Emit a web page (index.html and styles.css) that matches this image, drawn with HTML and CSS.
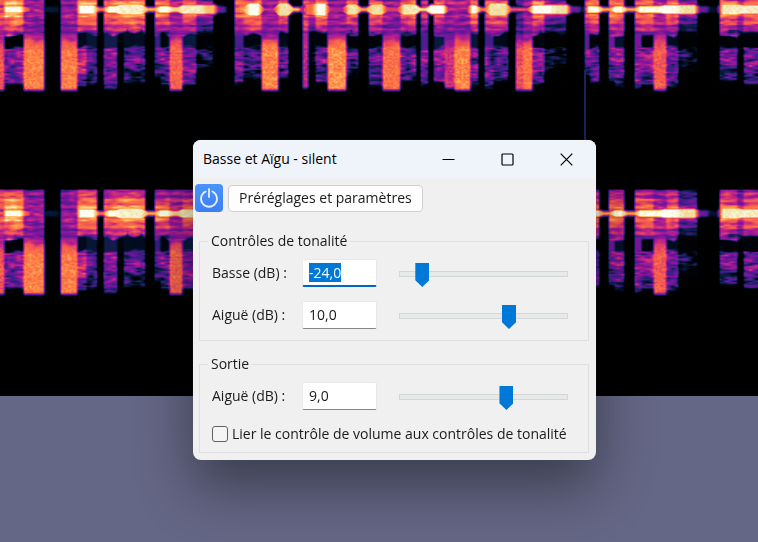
FILE: index.html
```html
<!DOCTYPE html>
<html lang="fr">
<head>
<meta charset="utf-8">
<title>Basse et Aïgu - silent</title>
<link rel="stylesheet" href="styles.css">
</head>
<body>
<main class="workspace">
  <canvas class="spectrogram" aria-hidden="true"></canvas>
  <form class="dialog">
    <header class="titlebar">
      <h1 class="title">Basse et Aïgu - silent</h1>
      <button type="button" class="caption" aria-label="Réduire"><svg width="13" height="13" viewBox="0 0 13 13"><path d="M0.5 6.5H12.5"/></svg></button>
      <button type="button" class="caption" aria-label="Agrandir"><svg width="13" height="13" viewBox="0 0 13 13"><rect x="1" y="1" width="11" height="11" rx="1"/></svg></button>
      <button type="button" class="caption" aria-label="Fermer"><svg width="13" height="13" viewBox="0 0 13 13"><path d="M0.7 0.7L12.3 12.3M12.3 0.7L0.7 12.3"/></svg></button>
    </header>
    <div class="toolbar">
      <button type="button" class="power" aria-label="Activer"><svg width="20" height="20" viewBox="0 0 20 20"><path d="M6.6 3.5A8 8 0 1 0 13.4 3.5M10 1V9"/></svg></button>
      <button type="button" class="presets">Préréglages et paramètres</button>
    </div>
    <fieldset class="group">
      <legend>Contrôles de tonalité</legend>
      <div class="row">
        <label for="bass">Basse (dB) :</label>
        <input id="bass" class="value" type="text" value="-24,0">
        <input class="slider" type="range" min="-30" max="30" value="-24" aria-label="Basse">
      </div>
      <div class="row">
        <label for="treble">Aiguë (dB) :</label>
        <input id="treble" class="value" type="text" value="10,0">
        <input class="slider" type="range" min="-30" max="30" value="10" aria-label="Aiguë">
      </div>
    </fieldset>
    <fieldset class="group group-output">
      <legend>Sortie</legend>
      <div class="row">
        <label for="volume">Aiguë (dB) :</label>
        <input id="volume" class="value" type="text" value="9,0">
        <input class="slider" type="range" min="-30" max="30" value="9" aria-label="Volume">
      </div>
      <div class="check">
        <input id="link" type="checkbox">
        <label for="link">Lier le contrôle de volume aux contrôles de tonalité</label>
      </div>
    </fieldset>
  </form>
</main>
<script src="script.js"></script>
</body>
</html>
```

FILE: styles.css
```css
* {
  box-sizing: border-box;
}

body {
  margin: 0;
  min-height: 100vh;
  overflow: hidden;
  background: #646785;
  color: #1a1a1a;
  font: 14px/20px "Open Sans", "Noto Sans", sans-serif;
}

button,
input {
  font: inherit;
  color: inherit;
}

.workspace {
  position: relative;
}

.spectrogram {
  display: block;
  width: 100%;
  height: 396px;
  background: #000;
}

.dialog {
  position: absolute;
  left: 193px;
  top: 140px;
  width: 403px;
  padding-bottom: 7px;
  border-radius: 8px;
  overflow: hidden;
  background: #f0f0f0;
  box-shadow: 0 0 1px #555, 0 26px 56px rgba(0, 0, 0, 0.42);
}

.titlebar {
  display: flex;
  align-items: center;
  height: 38px;
  padding-left: 10px;
  background: #eff3fa;
}

.title {
  flex: 1;
  margin: 0;
  font-size: 14px;
  font-weight: 400;
  color: #000;
}

.caption {
  display: grid;
  place-items: center;
  width: 59px;
  height: 38px;
  padding: 0;
  border: 0;
  background: none;
}

.caption svg {
  fill: none;
  stroke: #000;
  stroke-width: 1.2;
}

.toolbar {
  display: flex;
  align-items: center;
  gap: 5px;
  padding: 6px 2px 0;
}

.power {
  display: grid;
  place-items: center;
  width: 28px;
  height: 28px;
  padding: 0;
  border: 0;
  border-radius: 4px;
  background: linear-gradient(#4a93fb, #3d7ff2);
}

.power svg {
  fill: none;
  stroke: #e4efff;
  stroke-width: 1.8;
  stroke-linecap: round;
}

.presets {
  height: 27px;
  padding: 0 10px;
  border: 1px solid #d0d0d0;
  border-radius: 4px;
  background: #fdfdfd;
}

.group {
  min-width: 0;
  margin: 19px 7px 0 6px;
  padding: 8px 20px 11px 12px;
  border: 1px solid #dfdfdf;
}

.group-output {
  margin-top: 13px;
  padding-bottom: 8px;
}

.group legend {
  margin-left: -4px;
  padding: 0 3px;
}

.row {
  display: grid;
  grid-template-columns: 90px 75px 1fr;
  align-items: center;
  height: 28px;
}

.row + .row,
.row + .check {
  margin-top: 14px;
}

.value {
  width: 100%;
  height: 28px;
  padding: 0 6px 2px;
  border: 1px solid #e8e8e8;
  border-bottom-color: #868686;
  border-radius: 2px;
  background: #fff;
}

.value:focus {
  padding-bottom: 0;
  outline: 0;
  border-bottom: 2px solid #0067c0;
}

.value::selection {
  background: #0078d7;
  color: #fff;
}

.slider {
  appearance: none;
  width: auto;
  height: 24px;
  margin: 2px 0 0 22px;
  background: none;
}

.slider::-webkit-slider-runnable-track {
  height: 6px;
  border: 1px solid #d6d6d6;
  background: #e7eaea;
}

.slider::-webkit-slider-thumb {
  appearance: none;
  width: 14px;
  height: 24px;
  margin-top: -9px;
  background: #0078d7;
  clip-path: polygon(0 0, 100% 0, 100% 72%, 50% 100%, 0 72%);
}

.check {
  display: flex;
  align-items: center;
  gap: 4px;
}

.check input {
  appearance: none;
  flex: none;
  width: 16px;
  height: 16px;
  margin: 0;
  border: 1px solid #626262;
  border-radius: 3px;
  background: #f5f5f5;
}
```

FILE: script.js
```js
// Spectral columns: start, end, level above 31, level in the 31-45 gap, level below 45, lower limit.
const COLUMNS = [
  [-5, 4, .66, .5, .7, 90], [4, 23, .68, .04, .42, 84], [23, 44, .5, .66, .79, 90],
  [60, 77, .48, .62, .78, 90], [77, 86, .66, .12, .5, 86], [86, 97, .64, .18, .3, 84],
  [103, 117, .6, .22, .46, 88], [117, 123, .6, .1, .08, 60], [123, 145, .64, .14, .35, 82],
  [154, 160, .56, .3, .42, 76], [160, 169, .54, .1, .37, 84], [169, 182, .5, .64, .73, 90],
  [182, 196, .54, .2, .46, 84], [196, 213, .3, .04, .2, 68],
  [234, 243, .56, .34, .4, 84], [243, 261, .58, .1, .3, 78], [261, 278, .48, .6, .8, 90],
  [278, 288, .56, .12, .38, 78], [302, 308, .62, .58, .56, 88], [308, 315, .36, .08, .18, 65],
  [315, 327, .62, .1, .4, 82], [327, 346, .48, .65, .82, 90], [346, 358, .52, .05, .34, 76],
  [368, 382, .54, .07, .33, 86], [382, 400, .46, .64, .76, 90], [400, 416, .54, .08, .38, 80],
  [420, 428, .44, .35, .4, 86], [433, 444, .52, .2, .43, 82], [444, 454, .5, .42, .6, 88],
  [454, 470, .47, .64, .8, 90], [470, 478, .58, .18, .4, 86], [484, 493, .54, .32, .44, 88],
  [493, 508, .55, .12, .38, 80], [515, 523, .35, .5, .68, 90], [523, 532, .5, .6, .78, 90],
  [532, 544, .56, .1, .46, 84], [544, 566, .28, .03, .19, 70],
  [584, 589, .5, .4, .42, 74], [589, 599, .57, .06, .4, 82], [608, 614, .54, .42, .45, 80],
  [614, 624, .56, .16, .42, 86], [634, 641, .54, .44, .45, 88], [641, 653, .56, .07, .42, 84],
  [653, 666, .5, .61, .7, 90], [666, 678, .57, .14, .46, 86], [678, 697, .27, .04, .2, 70],
  [719, 737, .56, .07, .38, 80], [737, 743, .4, .04, .08, 60], [743, 765, .56, .07, .42, 84]
];
// Fundamental line: start, end, peak level, half height.
const LINE = [
  [2, 23, 1, 3], [23, 31, .68, 2], [31, 60, .18, 2], [76, 96, 1, 4], [96, 105, .74, 1],
  [105, 118, 1, 3], [118, 144, .97, 5], [144, 157, .88, 1], [157, 170, 1, 3], [170, 180, .92, 2],
  [180, 204, .97, 4], [204, 216, .88, 4], [216, 226, .4, 2], [236, 246, .8, 3], [246, 261, 1, 6],
  [261, 276, .6, 1], [276, 290, .95, 6], [290, 301, .9, 1], [303, 314, .74, 5],
  [314, 327, 1, 6], [327, 345, .55, 2], [345, 358, .95, 5], [358, 369, .85, 1],
  [369, 384, .95, 5], [384, 400, .62, 2], [400, 417, .96, 5], [417, 428, .97, 1],
  [428, 446, 1, 4], [446, 467, .5, 2], [468, 478, 1, 4], [478, 487, .75, 1],
  [487, 508, .95, 6], [508, 530, .68, 1], [530, 552, 1, 4], [552, 569, .95, 4],
  [569, 581, .4, 2], [585, 600, 1, 3], [600, 612, .86, 1], [612, 624, 1, 3],
  [624, 637, .87, 1], [637, 662, 1, 3], [662, 678, 1, 4], [678, 697, .95, 4],
  [697, 708, .4, 2], [708, 719, .14, 2], [719, 739, .97, 5], [739, 765, .97, 4]
];
const STOPS = [
  [0, 0, 0, 0], [.1, 0, 5, 14], [.2, 8, 26, 62], [.31, 62, 30, 138], [.45, 132, 20, 158],
  [.57, 192, 36, 134], [.68, 240, 82, 84], [.79, 255, 124, 66], [.88, 255, 184, 96],
  [.95, 240, 224, 160], [1, 255, 255, 244]
];
const SPAN = 758;
const LINE_Y = 9;

function hash(x, y) {
  let n = Math.imul(x + 101, 374761393) + Math.imul(y + 57, 668265263);
  n = Math.imul(n ^ (n >>> 13), 1274126177);
  return ((n ^ (n >>> 16)) >>> 0) / 4294967295;
}

function noise(x, y, sx, sy) {
  const u = x / sx, v = y / sy;
  const i = Math.floor(u), j = Math.floor(v);
  const a = u - i, b = v - j;
  return (hash(i, j) * (1 - a) + hash(i + 1, j) * a) * (1 - b)
    + (hash(i, j + 1) * (1 - a) + hash(i + 1, j + 1) * a) * b;
}

const clamp = v => Math.max(0, Math.min(1, v));
const ease = v => { const t = clamp(v); return t * t * (3 - 2 * t); };
const within = (x, a, b, soft) => ease((x - a) / soft + .5) * ease((b - x) / soft + .5);

function level(x, y) {
  let v = 0;
  const d = Math.abs(y - LINE_Y);
  const grain = noise(x, y, 6, 1.6) - .5;
  const patch = noise(x + 300, y + 90, 7, 5) - .5;
  const fine = noise(x, y, 2, 1.5) - .5;
  for (const [a, b, up, gap, low, end] of COLUMNS) {
    const w = within(x, a, b, 4);
    if (!w) continue;
    const solid = low > .55;
    const s1 = ease((y - (solid ? 26 : 31) - patch * 8) / (solid ? 20 : 5));
    const s2 = ease((y - (solid ? 35 : 45) - patch * 6) / (solid ? 16 : 4));
    const ridge = Math.cos(d * .95) * .06 + (solid ? 0 : .2 * Math.exp(-Math.pow(d / 13, 2)));
    const top = up + ridge - clamp((d - 14) / 12) * .12 + grain * .2 + patch * .14;
    const bottom = low + (solid ? fine * .12 + grain * .07 : grain * .34 + patch * .3);
    let c = (top * (1 - s1) + gap * s1) * (1 - s2) + bottom * s2;
    if (!solid) c -= ease((y - end + 22) / 22) * .12;
    c *= ease((end + 3 - y) / 6);
    v += Math.max(0, c) * w;
  }
  let weight = 0, peak = 0, half = 0;
  for (const [a, b, p, h] of LINE) {
    const w = within(x, a, b, 8);
    weight += w;
    peak += p * w;
    half += h * w;
  }
  if (weight > 0) {
    half = half / weight + .8;
    const c = peak * (1 - ease((d - half + 1.8) / 5));
    v = Math.max(v, c + fine * .04);
  }
  return clamp(v * ease((y + 16) / 2));
}

function color(v) {
  let k = 1;
  while (k < STOPS.length - 1 && v > STOPS[k][0]) k++;
  const p = STOPS[k - 1], q = STOPS[k];
  const t = (v - p[0]) / (q[0] - p[0]);
  return [1, 2, 3].map(c => p[c] + (q[c] - p[c]) * t);
}

function draw() {
  const canvas = document.querySelector(".spectrogram");
  canvas.width = canvas.clientWidth;
  canvas.height = canvas.clientHeight;
  const ctx = canvas.getContext("2d");
  ctx.fillStyle = "#000";
  ctx.fillRect(0, 0, canvas.width, canvas.height);
  const band = ctx.createImageData(canvas.width, 108);
  for (let y = 0; y < 108; y++) {
    for (let x = 0; x < canvas.width; x++) {
      const rgb = color(level(x % SPAN, y - 15));
      const i = (y * canvas.width + x) * 4;
      band.data[i] = rgb[0];
      band.data[i + 1] = rgb[1];
      band.data[i + 2] = rgb[2];
      band.data[i + 3] = 255;
    }
  }
  ctx.putImageData(band, 0, -15);
  ctx.putImageData(band, 0, 189);
  ctx.fillStyle = "#14265c";
  ctx.fillRect(584, 70, 2, 70);
}

draw();
window.addEventListener("resize", draw);
const bass = document.getElementById("bass");
bass.focus();
bass.select();
```
